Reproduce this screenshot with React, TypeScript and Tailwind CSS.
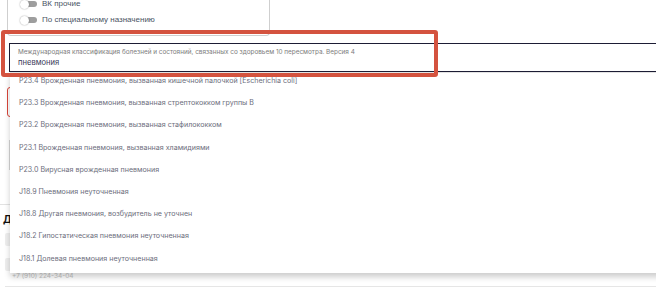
import React from "react";

const items = [
  "P23.4 Врожденная пневмония, вызванная кишечной палочкой [Escherichia coli]",
  "P23.3 Врожденная пневмония, вызванная стрептококком группы B",
  "P23.2 Врожденная пневмония, вызванная стафилококком",
  "P23.1 Врожденная пневмония, вызванная хламидиями",
  "P23.0 Вирусная врожденная пневмония",
  "J18.9 Пневмония неуточненная",
  "J18.8 Другая пневмония, возбудитель не уточнен",
  "J18.2 Гипостатическая пневмония неуточненная",
  "J18.1 Долевая пневмония неуточненная",
];

function Toggle({ label }: { label: string }) {
  return (
    <div className="flex items-center h-[16px] gap-[5px] pl-[12px]">
      <div className="relative w-[17px] h-[9px]">
        <div className="absolute left-[4px] top-[1.5px] w-[13px] h-[6px] rounded-full bg-[#9e9e9e]" />
        <div className="absolute left-0 top-0 w-[9px] h-[9px] rounded-full bg-white shadow-[0_0_1.5px_rgba(0,0,0,0.45)]" />
      </div>
      <span className="text-[8px] leading-[10px] text-[#4a5464] [font-family:'Liberation_Sans',Arial,sans-serif]">
        {label}
      </span>
    </div>
  );
}

export default function App() {
  return (
    <div className="relative w-[656px] h-[295px] overflow-hidden bg-white [font-family:Inter,'Noto_Sans',sans-serif]">
      {/* top card with toggles */}
      <div className="flex flex-col ml-[7px] w-[263px] h-[36px] border-x border-b border-[#cfcfcf] rounded-b-[4px]">
        <div className="-mt-[4px] flex flex-col">
          <Toggle label="ВК прочие" />
          <Toggle label="По специальному назначению" />
        </div>
      </div>

      {/* search input */}
      <div className="mt-[7px] ml-[9px] w-[660px] h-[29px] border border-[#1d1d35] flex flex-col justify-center pl-[8px] gap-[2px]">
        <div className="text-[6.4px] leading-[8px] text-[#7d7d7d] whitespace-nowrap">
          Международная классификация болезней и состояний, связанных со здоровьем 10 пересмотра. Версия 4
        </div>
        <div className="text-[7.6px] leading-[10px] text-[#3a3a58]">пневмония</div>
      </div>

      {/* underlying form content */}
      <div className="mt-[15px] ml-[7px] w-[300px] h-[30px] border border-[#d8453a] rounded-[3px]" />
      <div className="mt-[23px] ml-[9px] w-[300px] h-[30px] border-l border-[#d6d6d6]" />
      <div className="mt-[34px] w-[300px] border-t border-[#e2e2e2]" />
      <div className="mt-[8px] ml-[3px] text-[10px] leading-[12px] font-bold text-[#111]">Д</div>
      <div className="mt-[8px] ml-[5px] w-[300px] h-[13px] bg-[#eeeeee] rounded-[2px]" />
      <div className="mt-[12px] ml-[5px] w-[300px] h-[13px] bg-[#eeeeee] rounded-[2px]" />
      <div className="mt-[1px] ml-[12px] text-[6.5px] leading-[8px] text-[#c4c4c4]">+7 (910) 224-34-04</div>
      <div className="mt-[6px] ml-[5px] border-t border-[#e6e6e6]" />

      {/* dropdown */}
      <div className="absolute left-[10px] top-[72px] w-[660px] bg-white border-t border-[#e3e3e3] shadow-[0_4px_6px_rgba(0,0,0,0.2)]">
        {items.map((t) => (
          <div key={t} className="h-[22.2px] pt-[3px] pl-[9px]">
            <div className="text-[7.1px] leading-[10px] text-[#6c6d7c] whitespace-nowrap">{t}</div>
          </div>
        ))}
      </div>

      {/* red annotation frame */}
      <div className="absolute left-[1px] top-[30px] w-[437px] h-[47px] border-[4.5px] border-[#d4533f] rounded-[3px]" />
    </div>
  );
}
